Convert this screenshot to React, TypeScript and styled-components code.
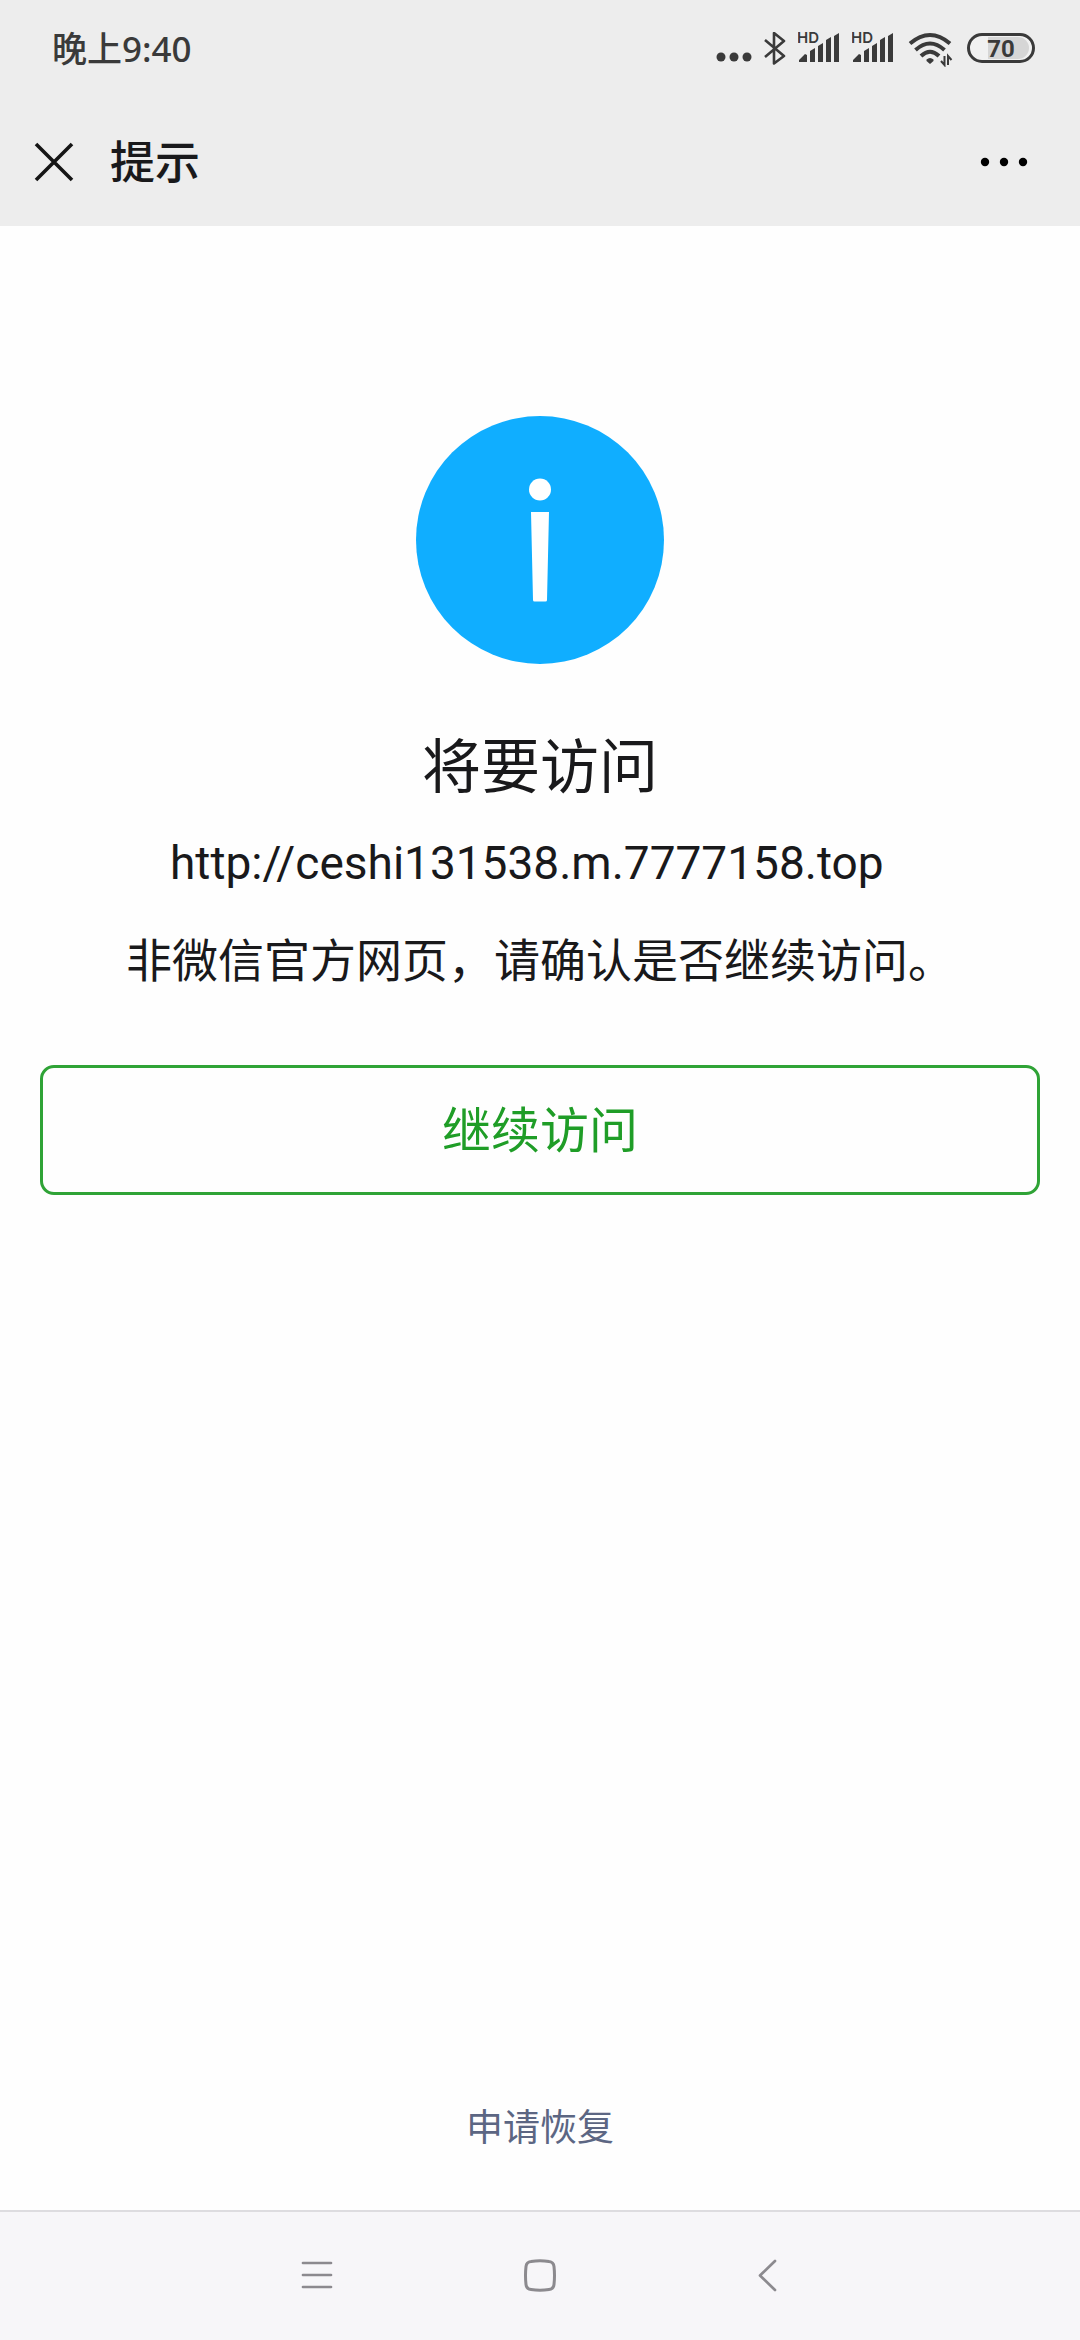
import React from "react";
import styled, { createGlobalStyle } from "styled-components";

const GlobalStyle = createGlobalStyle`
  *, *::before, *::after { box-sizing: border-box; }
  body {
    margin: 0;
    background: #fefefe;
    color: #19191b;
    font-family: Roboto, "Noto Sans CJK SC", sans-serif;
  }
  button { margin: 0; padding: 0; border: 0; background: none; font: inherit; color: inherit; }
  svg { display: block; }
`;

const Screen = styled.div`
  display: flex;
  flex-direction: column;
  min-height: 100vh;
`;

const Header = styled.header`
  background: #ededed;
`;

const StatusBar = styled.div`
  display: flex;
  align-items: center;
  justify-content: space-between;
  height: 98px;
  padding: 0 44px 0 52px;
  color: #3a3a3a;
`;

const Clock = styled.time`
  font: 500 35px/48px "Noto Sans", "Noto Sans CJK SC", sans-serif;
`;

const StatusIcons = styled.div`
  display: flex;
  align-items: center;
  gap: 10px;
`;

const TitleBar = styled.div`
  display: flex;
  align-items: center;
  height: 128px;
  padding: 0 50px 0 28px;
`;

const IconButton = styled.button`
  display: grid;
  place-items: center;
  width: 52px;
  height: 52px;
`;

const PageTitle = styled.h1`
  flex: 1;
  margin: 0;
  padding: 4px 0 0 30px;
  font-size: 45px;
  line-height: 60px;
  font-weight: 500;
`;

const Main = styled.main`
  flex: 1;
  display: flex;
  flex-direction: column;
  align-items: center;
  padding: 188px 40px 46px;
`;

const Heading = styled.h2`
  margin: 62px 0 0;
  font-size: 59px;
  line-height: 84px;
  font-weight: 400;
`;

const Message = styled.div`
  margin-top: 4px;
  font-size: 46px;
  line-height: 98px;
`;

const Line = styled.p`
  margin: 0;
`;

const Address = styled(Line)`
  padding-left: 44px;
`;

const ContinueButton = styled.button`
  width: 100%;
  height: 130px;
  margin-top: 55px;
  padding-top: 4px;
  border: 3px solid #2fa336;
  border-radius: 14px;
  color: #1f9d27;
  font-size: 49px;
  line-height: 72px;
`;

const RestoreLink = styled.a`
  margin-top: auto;
  color: #5c6683;
  font-size: 37px;
  line-height: 70px;
  text-decoration: none;
`;

const NavBar = styled.nav`
  display: flex;
  align-items: center;
  justify-content: center;
  gap: 145px;
  height: 130px;
  border-top: 2px solid #dddce0;
  background: #f7f6f9;
  color: #8c8a8f;
`;

const NavButton = styled.button`
  width: 80px;
  height: 80px;
`;

const MoreDots = () => (
  <svg width="44" height="34" viewBox="0 0 44 34" fill="currentColor">
    <circle cx="11" cy="25" r="4.5" />
    <circle cx="24" cy="25" r="4.5" />
    <circle cx="37" cy="25" r="4.5" />
  </svg>
);

const Bluetooth = () => (
  <svg width="24" height="34" viewBox="0 0 24 34" fill="none" stroke="currentColor" strokeWidth="2.6" strokeLinejoin="round">
    <path d="M1 8 20 24 10 31.500V1l10 8L1 25" />
  </svg>
);

const Signal = () => (
  <svg width="44" height="42" viewBox="0 -4 44 42" fill="currentColor">
    <text x="-1" y="11" fontFamily="Inter, sans-serif" fontSize="15" fontWeight="600">HD</text>
    <path d="M1 30v-2l6-6 2 1v7zM12 30V19l5-3v14zM20 30V14l5-3v19zM28 30V8l5-3v25zM36 30V4l5-3v29z" />
  </svg>
);

const Wifi = () => (
  <svg width="50" height="36" viewBox="-2 0 50 36" fill="none" stroke="currentColor" strokeWidth="4">
    <path d="M2 12.500Q22 -4.500 42 12.500M7.500 19Q22 6 36.500 19M13 25Q22 16.500 31 25" />
    <path d="M18.500 28.500q3.500-3 7 0v1.500l-3.500 3-3.500-3z" fill="currentColor" stroke="none" />
    <path strokeWidth="2" d="M36.500 25v9l-3.500-4M40 34v-9l3.500 4" />
  </svg>
);

const Battery = () => (
  <svg width="70" height="34" viewBox="0 0 70 34">
    <rect x="2.500" y="2.500" width="65" height="27" rx="13.500" fill="#f1f1f1" />
    <path d="M22 5h30a11 11 0 0 1 0 22H22z" fill="#d6d6d6" />
    <rect x="2.500" y="2.500" width="65" height="27" rx="13.500" fill="none" stroke="currentColor" strokeWidth="3" />
    <text x="35" y="24.500" textAnchor="middle" fill="currentColor" fontFamily="Roboto, sans-serif" fontSize="24" fontWeight="700">70</text>
  </svg>
);

export default function App() {
  return (
    <Screen>
      <GlobalStyle />
      <Header>
        <StatusBar>
          <Clock>晚上9:40</Clock>
          <StatusIcons>
            <MoreDots />
            <Bluetooth />
            <Signal />
            <Signal />
            <Wifi />
            <Battery />
          </StatusIcons>
        </StatusBar>
        <TitleBar>
          <IconButton aria-label="关闭">
            <svg width="40" height="40" viewBox="0 0 40 40" stroke="#151515" strokeWidth="3.600">
              <path d="M2 2l36 36M38 2 2 38" />
            </svg>
          </IconButton>
          <PageTitle>提示</PageTitle>
          <IconButton aria-label="更多">
            <svg width="48" height="10" viewBox="0 0 48 10" fill="#000">
              <circle cx="5" cy="5" r="4.200" />
              <circle cx="24" cy="5" r="4.200" />
              <circle cx="43" cy="5" r="4.200" />
            </svg>
          </IconButton>
        </TitleBar>
      </Header>
      <Main>
        <svg width="250" height="250" viewBox="0 0 250 250" aria-hidden="true">
          <circle cx="125" cy="126" r="124" fill="#10aeff" />
          <circle cx="125" cy="75.500" r="11" fill="#fff" />
          <path d="M116 98h18l-2 88q0 1.500-1.500 1.500h-11q-1.500 0-1.500-1.500z" fill="#fff" />
        </svg>
        <Heading>将要访问</Heading>
        <Message>
          <Address>http://ceshi131538.m.7777158.top</Address>
          <Line>非微信官方网页，请确认是否继续访问。</Line>
        </Message>
        <ContinueButton>继续访问</ContinueButton>
        <RestoreLink href="#restore">申请恢复</RestoreLink>
      </Main>
      <NavBar>
        <NavButton aria-label="菜单">
          <svg width="80" height="80" viewBox="0 0 80 80" stroke="currentColor" strokeWidth="2.700" strokeLinecap="round">
            <path d="M28 27h28M28 39h28M28 51h28" />
          </svg>
        </NavButton>
        <NavButton aria-label="主页">
          <svg width="80" height="80" viewBox="0 0 80 80" fill="none" stroke="currentColor" strokeWidth="3">
            <path d="M31 25.500q9-1.500 18 0 4.500.5 5 5 1 9 0 18-.5 4.500-5 5-9 1.500-18 0-4.500-.5-5-5-1-9 0-18 .5-4.500 5-5z" />
          </svg>
        </NavButton>
        <NavButton aria-label="返回">
          <svg width="80" height="80" viewBox="0 0 80 80" fill="none" stroke="currentColor" strokeWidth="2.700" strokeLinecap="round" strokeLinejoin="round">
            <path d="M50 25 35 39.500 50 54" />
          </svg>
        </NavButton>
      </NavBar>
    </Screen>
  );
}
